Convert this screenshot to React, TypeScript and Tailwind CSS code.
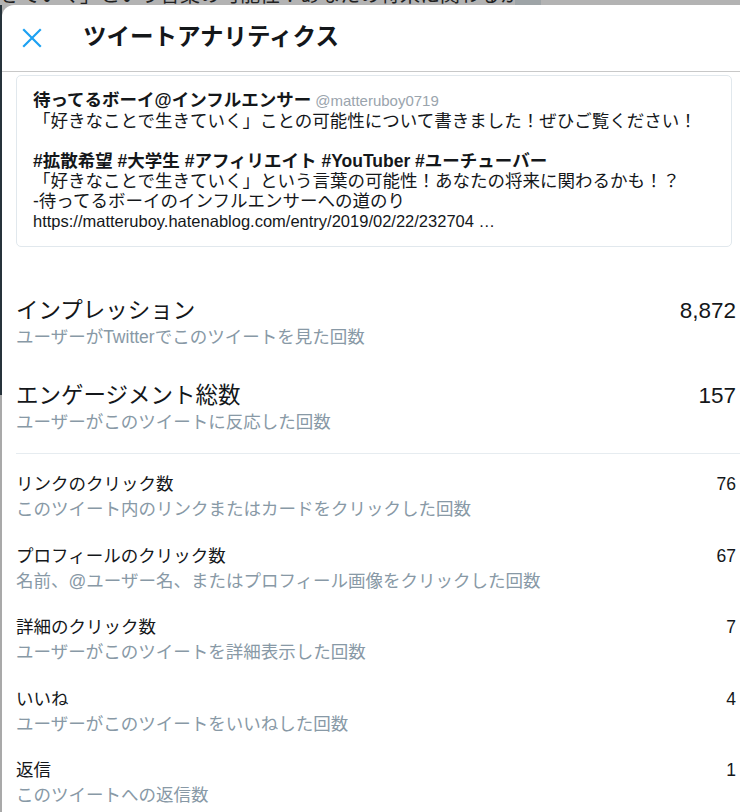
import React from 'react';

const font = "font-['Liberation_Sans','Noto_Sans_CJK_JP',sans-serif]";

const rows = [
    { title: 'リンクのクリック数', sub: 'このツイート内のリンクまたはカードをクリックした回数', value: '76' },
    { title: 'プロフィールのクリック数', sub: '名前、@ユーザー名、またはプロフィール画像をクリックした回数', value: '67' },
    { title: '詳細のクリック数', sub: 'ユーザーがこのツイートを詳細表示した回数', value: '7' },
    { title: 'いいね', sub: 'ユーザーがこのツイートをいいねした回数', value: '4' },
    { title: '返信', sub: 'このツイートへの返信数', value: '1' },
];

function CloseIcon() {
    return (
        <svg width="20" height="20" viewBox="0 0 20 20" fill="none" stroke="#1da1f2" strokeWidth="2.2" strokeLinecap="square">
            <path d="M2 2 L18 18 M18 2 L2 18" />
        </svg>
    );
}

function BigStat({ title, sub, value, className }: { title: string; sub: string; value: string; className?: string }) {
    return (
        <div className={`flex justify-between items-start ${className ?? ''}`}>
            <div className="flex flex-col">
                <span className="text-[22.5px] leading-[28px] text-[#14171a]">{title}</span>
                <span className="text-[17.5px] leading-[24px] text-[#8899a6]">{sub}</span>
            </div>
            <span className="text-[22.5px] leading-[28px] text-[#14171a]">{value}</span>
        </div>
    );
}

export default function App() {
    return (
        <div className={`h-[812px] w-[740px] overflow-hidden bg-[#b3b3b3] flex flex-col ${font}`}>
            {/* page behind the modal */}
            <div className="h-[5px] overflow-hidden shrink-0 flex">
                <div className="-mt-[15px] text-[20px] leading-[20px] text-[#222] whitespace-nowrap w-[515px] overflow-hidden">
                    きていく」という言葉の可能性！あなたの将来に関わるか
                </div>
                <div className="w-[26px] h-[5px] bg-[#9ea4a7]" />
            </div>
            <div className="flex flex-1 min-h-0">
                <div className="w-[2px] flex flex-col shrink-0">
                    <div className="h-[390px] bg-[#26333b]" />
                    <div className="flex-1 bg-[#a9a9a9]" />
                </div>

                {/* modal */}
                <div className="flex-1 bg-white rounded-tl-[12px] flex flex-col">
                    <div className="h-[67px] border-b border-[#c8c8c8] flex items-center pl-[20px] shrink-0">
                        <CloseIcon />
                        <h1 className="ml-[41px] text-[23.5px] font-bold text-[#14171a] leading-none">ツイートアナリティクス</h1>
                    </div>

                    <div className="pl-[14px] pr-[4px] flex flex-col">
                        {/* tweet */}
                        <div className="mt-[3px] mr-[4px] h-[172px] border border-[#e1e8ed] rounded-[5px] px-[16px] py-[14px] text-[#14171a] text-[17.5px] leading-[20px] overflow-hidden">
                            <div className="whitespace-nowrap">
                                <span className="font-bold">待ってるボーイ@インフルエンサー</span>
                                <span className="ml-[4px] text-[15px] text-[#9aa4ad]">@matteruboy0719</span>
                            </div>
                            <div className="whitespace-nowrap">「好きなことで生きていく」ことの可能性について書きました！ぜひご覧ください！</div>
                            <div className="h-[20px]" />
                            <div className="whitespace-nowrap font-bold">#拡散希望 #大学生 #アフィリエイト #YouTuber #ユーチューバー</div>
                            <div className="whitespace-nowrap">「好きなことで生きていく」という言葉の可能性！あなたの将来に関わるかも！？</div>
                            <div className="whitespace-nowrap">-待ってるボーイのインフルエンサーへの道のり</div>
                            <div className="whitespace-nowrap text-[16.5px]">https://matteruboy.hatenablog.com/entry/2019/02/22/232704 …</div>
                        </div>

                        <BigStat className="mt-[50px]" title="インプレッション" sub="ユーザーがTwitterでこのツイートを見た回数" value="8,872" />
                        <BigStat className="mt-[33px]" title="エンゲージメント総数" sub="ユーザーがこのツイートに反応した回数" value="157" />

                        <div className="mt-[19px] h-px bg-[#e6ecf0] -mr-[4px]" />

                        <div className="mt-[18px] flex flex-col gap-[21.5px]">
                            {rows.map((r) => (
                                <div key={r.title} className="flex justify-between items-start">
                                    <div className="flex flex-col">
                                        <span className="text-[17.5px] leading-[24px] text-[#14171a]">{r.title}</span>
                                        <span className="text-[17.5px] leading-[26px] text-[#8899a6] whitespace-nowrap">{r.sub}</span>
                                    </div>
                                    <span className="text-[17.5px] leading-[24px] text-[#14171a]">{r.value}</span>
                                </div>
                            ))}
                        </div>
                    </div>
                </div>
            </div>
        </div>
    );
}
